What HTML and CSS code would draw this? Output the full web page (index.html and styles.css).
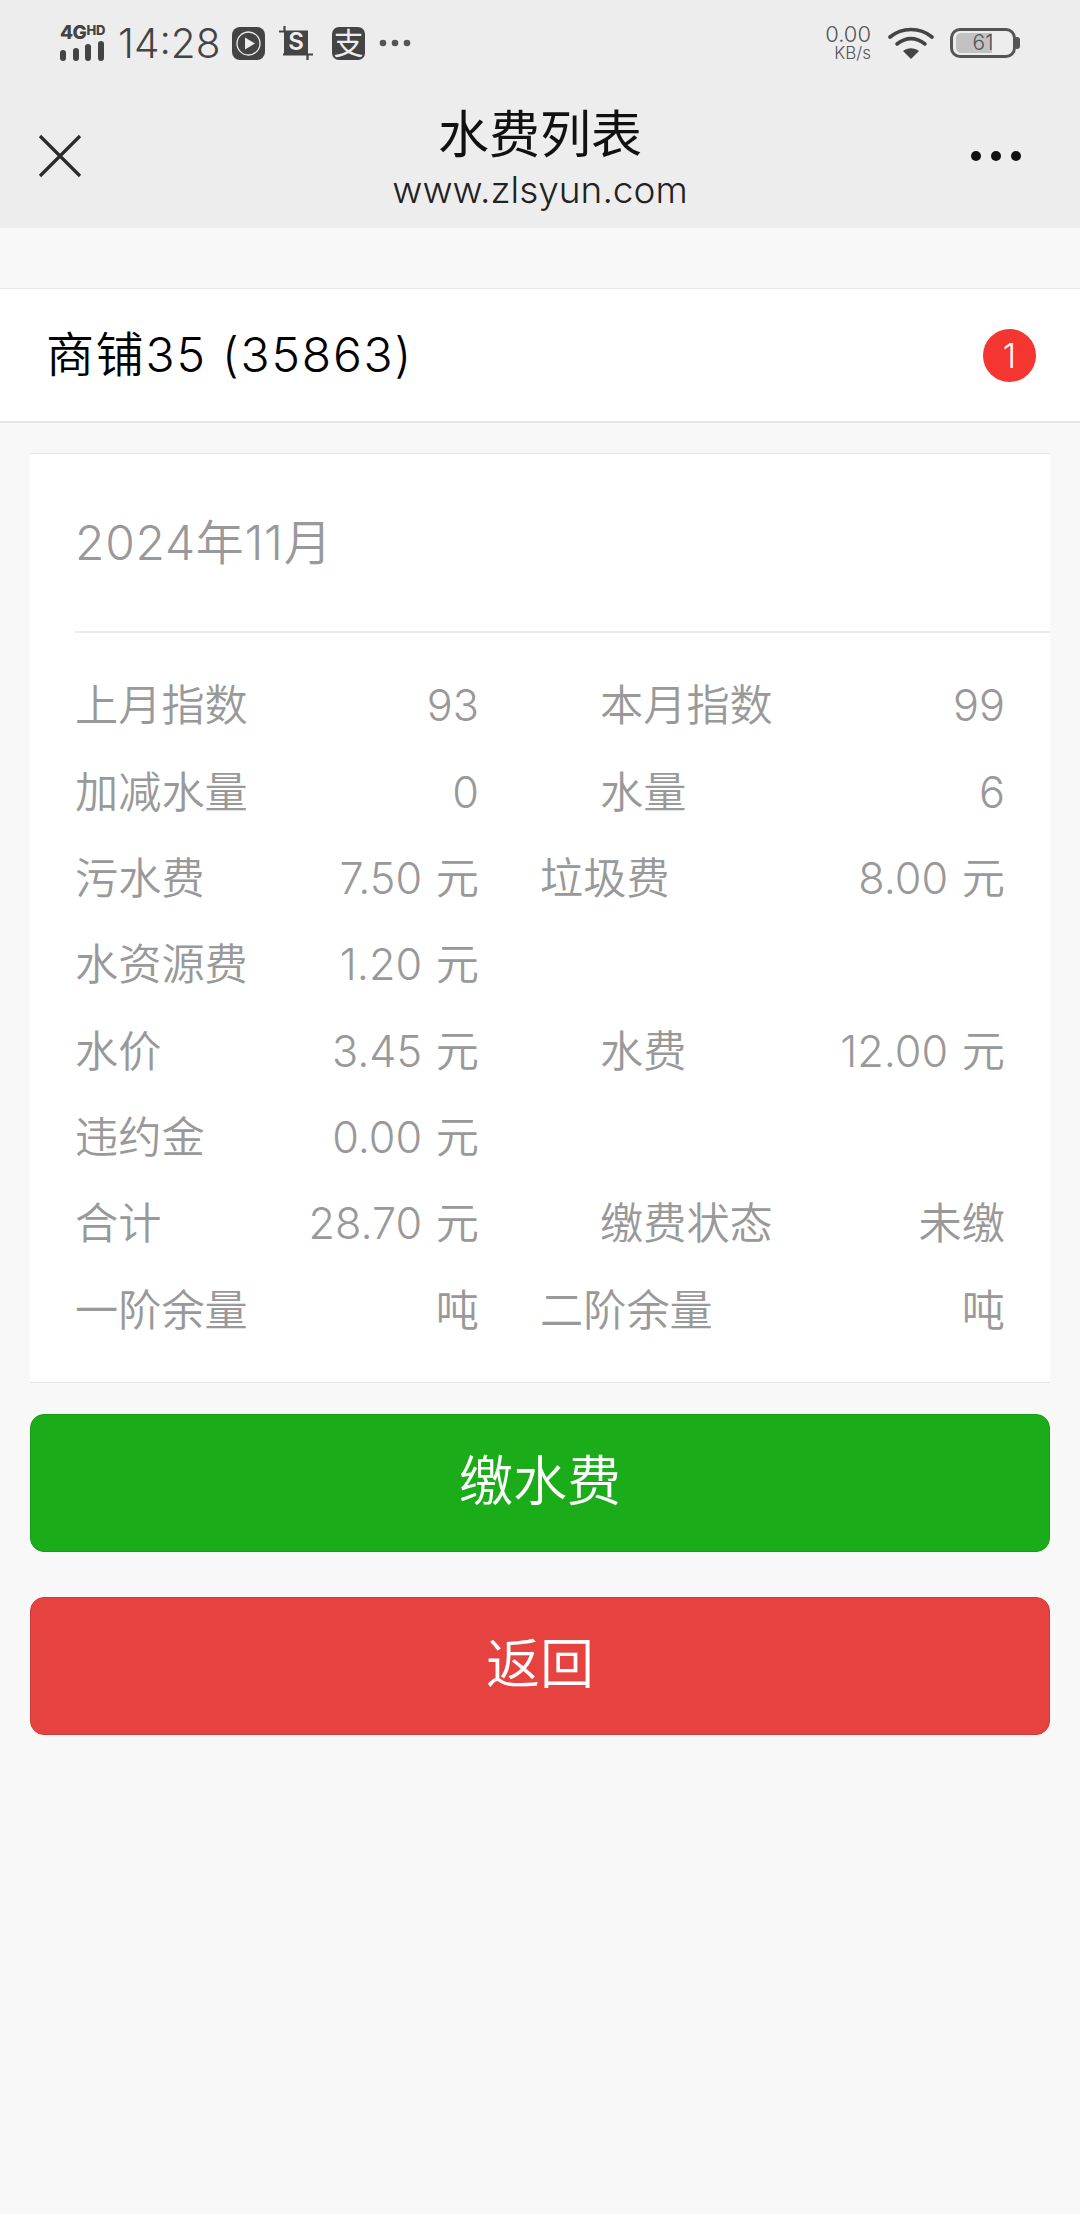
FILE: index.html
```html
<!DOCTYPE html>
<html lang="zh-CN">
<head>
<meta charset="utf-8">
<title>水费列表</title>
<link rel="stylesheet" href="styles.css">
</head>
<body>
<header class="top">
  <div class="status">
    <div class="status-left">
      <div class="signal">
        <div class="net"><span class="net-4g">4G</span><span class="net-hd">HD</span></div>
        <div class="bars"><i class="b1"></i><i class="b2"></i><i class="b3"></i><i class="b4"></i></div>
      </div>
      <span class="time">14:28</span>
      <svg class="ico" width="33" height="33" viewBox="0 0 33 33"><rect width="33" height="33" rx="8" fill="#444"/><circle cx="16.500" cy="16.500" r="11.500" fill="none" stroke="#ededed" stroke-width="1.300"/><path d="M13 10.500l10 6-10 6z" fill="#ededed"/></svg>
      <svg class="crop" width="34" height="34" viewBox="0 0 34 34"><rect x="5" y="5" width="24" height="24" fill="#444"/><path d="M0 5.500h29M5.500 0v5M4 28.500h30M28.500 29v5" stroke="#444" stroke-width="2.200" fill="none"/><text class="crop-s" x="17" y="24">S</text></svg>
      <span class="pay">支</span>
      <svg class="more-small" width="34" height="10" viewBox="0 0 34 10"><circle cx="5" cy="5" r="3.300" fill="#555"/><circle cx="17" cy="5" r="3.300" fill="#555"/><circle cx="29" cy="5" r="3.300" fill="#555"/></svg>
    </div>
    <div class="status-right">
      <div class="speed"><span class="speed-num">0.00</span><span class="speed-unit">KB/s</span></div>
      <svg class="wifi" width="46" height="34" viewBox="0 0 46 34"><path d="M2 11C14 1 32 1 44 11" fill="none" stroke="#444" stroke-width="3.600" stroke-linecap="round"/><path d="M9 18c9-7 19-7 28 0" fill="none" stroke="#444" stroke-width="3.600" stroke-linecap="round"/><path d="M23 33l-8-8c5-3.600 11-3.600 16 0z" fill="#444"/></svg>
      <div class="battery"><div class="battery-body"><span class="battery-fill"></span><span class="battery-num">61</span></div><span class="battery-tip"></span></div>
    </div>
  </div>
  <nav class="nav">
    <svg class="close" width="44" height="44" viewBox="0 0 44 44"><path d="M2 2l40 40M42 2L2 42" stroke="#2b2b2b" stroke-width="3.200" fill="none"/></svg>
    <div class="nav-title">
      <div class="title">水费列表</div>
      <div class="url">www.zlsyun.com</div>
    </div>
    <svg class="more" width="52" height="12" viewBox="0 0 52 12"><circle cx="6" cy="6" r="5" fill="#111"/><circle cx="26" cy="6" r="5" fill="#111"/><circle cx="46" cy="6" r="5" fill="#111"/></svg>
  </nav>
</header>

<main class="page">
  <section class="shop">
    <span class="shop-name">商铺35 (35863)</span>
    <span class="badge">1</span>
  </section>

  <section class="card">
    <div class="card-head"><div class="month">2024年11月</div></div>
    <div class="rows">
      <div class="cell"><span>上月指数</span><span>93</span></div>
      <div class="cell indent"><span>本月指数</span><span>99</span></div>
      <div class="cell"><span>加减水量</span><span>0</span></div>
      <div class="cell indent"><span>水量</span><span>6</span></div>
      <div class="cell"><span>污水费</span><span>7.50 元</span></div>
      <div class="cell"><span>垃圾费</span><span>8.00 元</span></div>
      <div class="cell"><span>水资源费</span><span>1.20 元</span></div>
      <div class="cell"></div>
      <div class="cell"><span>水价</span><span>3.45 元</span></div>
      <div class="cell indent"><span>水费</span><span>12.00 元</span></div>
      <div class="cell"><span>违约金</span><span>0.00 元</span></div>
      <div class="cell"></div>
      <div class="cell"><span>合计</span><span>28.70 元</span></div>
      <div class="cell indent"><span>缴费状态</span><span>未缴</span></div>
      <div class="cell"><span>一阶余量</span><span>吨</span></div>
      <div class="cell"><span>二阶余量</span><span>吨</span></div>
    </div>
  </section>

  <div class="actions">
    <button class="btn btn-pay" type="button">缴水费</button>
    <button class="btn btn-back" type="button">返回</button>
  </div>
</main>
</body>
</html>
```

FILE: styles.css
```css
* { box-sizing: border-box; }
html, body { margin: 0; padding: 0; }
body {
  width: 1080px;
  height: 2214px;
  overflow: hidden;
  background: #f8f8f8;
  font-family: Inter, "Noto Sans CJK SC", sans-serif;
  font-weight: 350;
  color: #000;
}

.top { height: 228px; background: #ededed; }

.status {
  height: 84px;
  padding: 2px 60px 0 60px;
  display: flex;
  justify-content: space-between;
  align-items: center;
}
.status-left { display: flex; align-items: center; }
.status-right { display: flex; align-items: center; }

.signal { width: 44px; display: flex; flex-direction: column; gap: 0; margin-top: -1px; }
.net { display: flex; align-items: flex-start; justify-content: space-between; height: 16px; color: #444; font-weight: 800; }
.net-4g { font-size: 19px; line-height: 16px; letter-spacing: -0.5px; }
.net-hd { font-size: 13px; line-height: 11px; }
.bars { display: flex; align-items: flex-end; justify-content: space-between; height: 20px; }
.bars i { display: block; width: 6px; background: #444; border-radius: 3px; }
.b1 { height: 11px; }
.b2 { height: 13px; }
.b3 { height: 17px; }
.b4 { height: 20px; }

.time { margin-left: 14px; font-size: 40.5px; line-height: 48px; padding-top: 1px; color: #444; width: 101px; font-weight: 300; }
.ico { margin-left: 13px; }

.crop { margin-left: 14px; }
.crop-s { fill: #ededed; font-size: 24px; font-weight: 600; text-anchor: middle; }

.pay {
  margin-left: 19px;
  width: 33px;
  height: 33px;
  border-radius: 7px;
  background: #444;
  color: #ededed;
  font-size: 30px;
  font-weight: 400;
  line-height: 32px;
  text-align: center;
}
.more-small { margin-left: 13px; }

.speed { width: 46px; display: flex; flex-direction: column; align-items: flex-end; color: #555; font-weight: 300; }
.speed-num { font-size: 22px; line-height: 21px; }
.speed-unit { font-size: 17px; line-height: 17px; }

.wifi { margin-left: 17px; }

.battery { margin-left: 16px; display: flex; align-items: center; }
.battery-body {
  position: relative;
  width: 66px;
  height: 30px;
  border: 3px solid #555;
  border-radius: 10px;
  overflow: hidden;
}
.battery-fill { position: absolute; left: 3px; top: 2px; bottom: 2px; width: 36px; background: #c2c2c2; border-radius: 5px 0 0 5px; }
.battery-num { position: absolute; left: 0; right: 0; top: 0; bottom: 0; text-align: center; font-size: 21px; line-height: 24px; color: #555; font-weight: 300; }
.battery-tip { width: 4px; height: 12px; background: #555; border-radius: 0 3px 3px 0; }

.nav {
  height: 144px;
  padding: 0 58px 0 38px;
  display: flex;
  align-items: center;
  justify-content: space-between;
  position: relative;
}
.close { margin-top: -1px; }
.nav-title { position: absolute; left: 0; right: 0; top: 14px; text-align: center; }
.title { font-size: 51px; line-height: 73px; color: #111; font-weight: 400; }
.url { font-size: 37px; line-height: 38px; color: #222; font-weight: 300; }

.page { display: block; }

.shop {
  margin-top: 60px;
  height: 135px;
  background: #fff;
  border-top: 1px solid #e6e6e6;
  border-bottom: 2px solid #e6e6e6;
  padding: 0 44px 0 46px;
  display: flex;
  align-items: center;
  justify-content: space-between;
}
.shop-name { font-size: 48px; line-height: 66px; color: #000; letter-spacing: 1.8px; }
.badge {
  width: 53px;
  height: 53px;
  border-radius: 50%;
  background: #f43530;
  color: #fff;
  font-size: 34px;
  font-weight: 300;
  line-height: 53px;
  text-align: center;
}

.card {
  margin: 30px 30px 0;
  background: #fff;
  border-top: 1px solid #e6e6e6;
  border-bottom: 1px solid #e6e6e6;
  padding-left: 45px;
}
.card-head { height: 179px; border-bottom: 2px solid #ececec; display: flex; align-items: center; }
.month { font-size: 48px; line-height: 60px; color: #999; letter-spacing: .7px; }

.rows {
  padding: 29px 45px 29px 0;
  display: grid;
  grid-template-columns: 404px 465px;
  grid-auto-rows: 86.36px;
  column-gap: 61px;
  font-size: 43.2px;
  line-height: 60px;
  word-spacing: 1.5px;
  color: #999;
}
.cell { display: flex; justify-content: space-between; align-items: center; }
.indent { padding-left: 60px; }

.actions { padding: 31px 30px 0; display: flex; flex-direction: column; gap: 45px; }
.btn {
  display: block;
  width: 100%;
  height: 138px;
  padding: 0 0 10px;
  border-radius: 14px;
  font-family: inherit;
  font-size: 54px;
  font-weight: 350;
  color: #fff;
  border: 1px solid;
}
.btn-pay { background: #1aad19; border-color: #179b16; }
.btn-back { background: #e64340; border-color: #ce3c39; }
```
